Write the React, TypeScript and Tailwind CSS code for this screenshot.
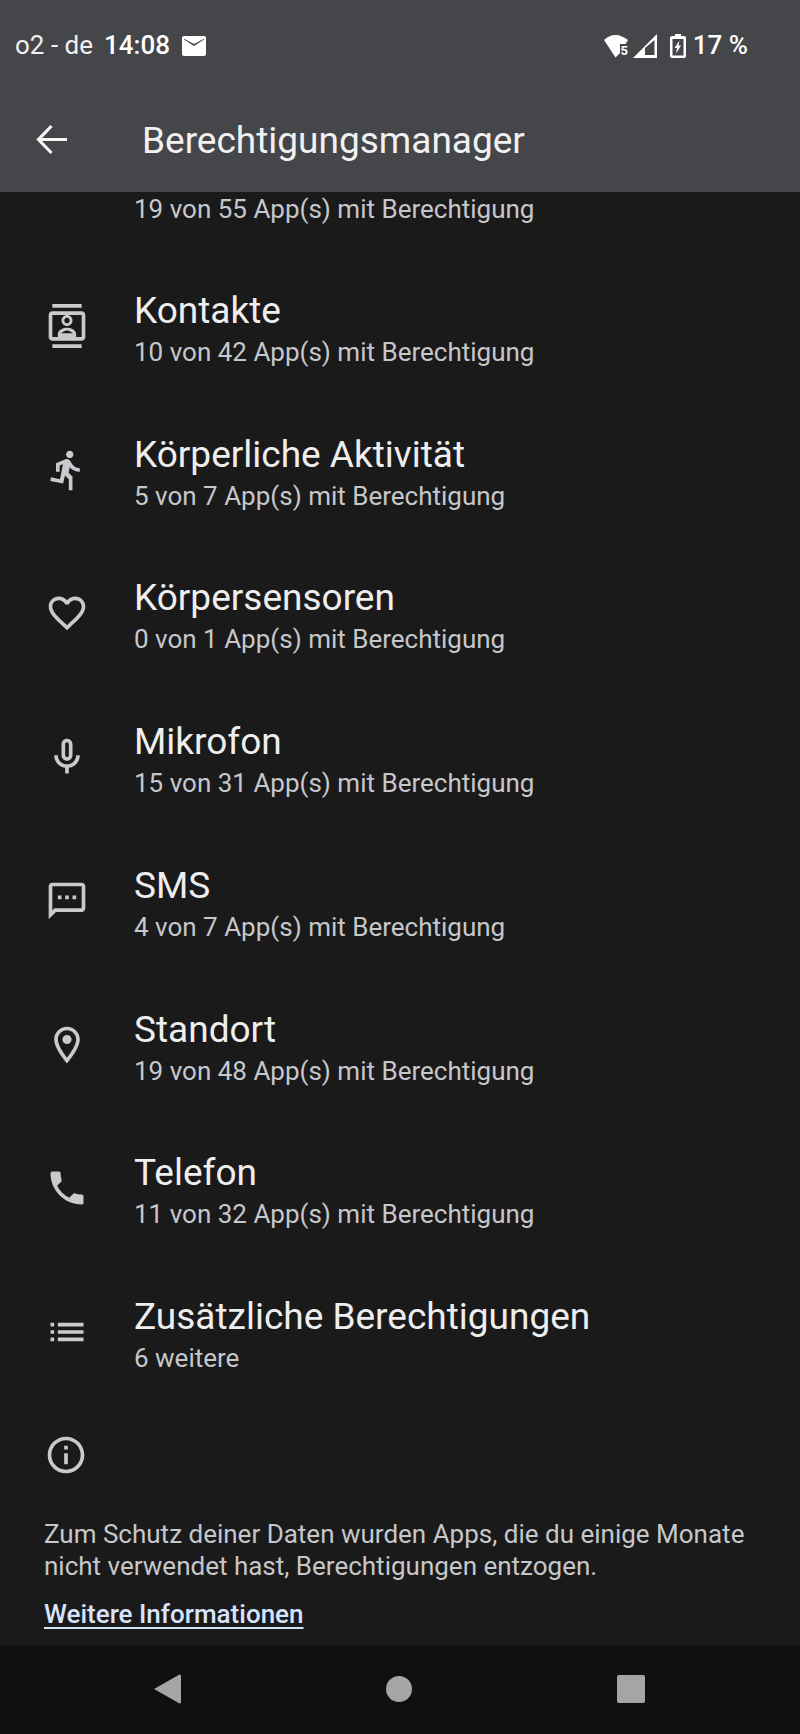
import React from "react";

const Ic = ({ d, cls = "w-[44px] h-[44px]" }: { d: string; cls?: string }) => (
  <svg viewBox="0 0 24 24" className={cls} fill="#c9cace">
    <path d={d} />
  </svg>
);

const icons: Record<string, string> = {
  contacts:
    "M20 0H4v2h16V0zM4 24h16v-2H4v2zM20 4H4c-1.1 0-2 .9-2 2v12c0 1.1.9 2 2 2h16c1.1 0 2-.9 2-2V6c0-1.1-.9-2-2-2zm0 14H4V6h16v12zM12 12c1.66 0 3-1.34 3-3s-1.34-3-3-3-3 1.34-3 3 1.34 3 3 3zm0-4.5c.83 0 1.5.67 1.5 1.5s-.67 1.5-1.5 1.5-1.5-.67-1.5-1.5.67-1.5 1.5-1.5zM17 16.5c0-2.5-3.31-3.5-5-3.5s-5 1-5 3.5V18h10v-1.5zM8.81 16c.61-.52 2.03-1.5 3.19-1.5 1.17 0 2.59.98 3.2 1.5H8.81z",
  run:
    "M13.49 5.48c1.1 0 2-.9 2-2s-.9-2-2-2-2 .9-2 2 .9 2 2 2zm-3.6 13.9l1-4.4 2.1 2v6h2v-7.5l-2.1-2 .6-3c1.3 1.5 3.3 2.5 5.5 2.5v-2c-1.9 0-3.5-1-4.3-2.4l-1-1.6c-.4-.6-1-1-1.7-1-.3 0-.5.1-.8.1l-5.2 2.2v4.7h2v-3.4l1.8-.7-1.6 8.1-4.9-1-.4 2 7 1.4z",
  heart:
    "M16.5 3c-1.74 0-3.41.81-4.5 2.09C10.91 3.81 9.24 3 7.5 3 4.42 3 2 5.42 2 8.5c0 3.78 3.4 6.86 8.55 11.54L12 21.35l1.45-1.32C18.6 15.36 22 12.28 22 8.5 22 5.42 19.58 3 16.5 3zm-4.4 15.55l-.1.1-.1-.1C7.14 14.24 4 11.39 4 8.5 4 6.5 5.5 5 7.5 5c1.54 0 3.04.99 3.57 2.36h1.87C13.46 5.99 14.96 5 16.5 5c2 0 3.5 1.5 3.5 3.5 0 2.89-3.14 5.74-7.9 10.05z",
  mic:
    "M12 14c1.66 0 3-1.34 3-3V5c0-1.66-1.34-3-3-3S9 3.34 9 5v6c0 1.66 1.34 3 3 3zm-1-9c0-.55.45-1 1-1s1 .45 1 1v6c0 .55-.45 1-1 1s-1-.45-1-1V5zm6 6c0 2.76-2.24 5-5 5s-5-2.24-5-5H5c0 3.53 2.61 6.43 6 6.92V21h2v-3.08c3.39-.49 6-3.39 6-6.92h-2z",
  sms:
    "M20 2H4c-1.1 0-2 .9-2 2v18l4-4h14c1.1 0 2-.9 2-2V4c0-1.1-.9-2-2-2zm0 14H5.17L4 17.17V4h16v12zM7 9h2v2H7zm4 0h2v2h-2zm4 0h2v2h-2z",
  place:
    "M12 2C8.13 2 5 5.13 5 9c0 5.25 7 13 7 13s7-7.75 7-13c0-3.87-3.13-7-7-7zM7 9c0-2.76 2.24-5 5-5s5 2.24 5 5c0 2.88-2.88 7.19-5 9.88C9.92 16.21 7 11.85 7 9zm5-2.5a2.5 2.5 0 1 0 0 5 2.5 2.5 0 0 0 0-5z",
  phone:
    "M6.62 10.79c1.44 2.83 3.76 5.14 6.59 6.59l2.2-2.2c.27-.27.67-.36 1.02-.24 1.12.37 2.33.57 3.57.57.55 0 1 .45 1 1V20c0 .55-.45 1-1 1-9.39 0-17-7.61-17-17 0-.55.45-1 1-1h3.5c.55 0 1 .45 1 1 0 1.25.2 2.45.57 3.57.11.35.03.74-.25 1.02l-2.2 2.2z",
  list:
    "M3 13h2v-2H3v2zm0 4h2v-2H3v2zm0-8h2V7H3v2zm4 4h14v-2H7v2zm0 4h14v-2H7v2zM7 7v2h14V7H7z",
  info:
    "M11 7h2v2h-2zm0 4h2v6h-2zm1-9C6.48 2 2 6.48 2 12s4.48 10 10 10 10-4.48 10-10S17.52 2 12 2zm0 18c-4.41 0-8-3.59-8-8s3.59-8 8-8 8 3.59 8 8-3.59 8-8 8z",
};

const rows = [
  ["contacts", "Kontakte", "10 von 42 App(s) mit Berechtigung"],
  ["run", "Körperliche Aktivität", "5 von 7 App(s) mit Berechtigung"],
  ["heart", "Körpersensoren", "0 von 1 App(s) mit Berechtigung"],
  ["mic", "Mikrofon", "15 von 31 App(s) mit Berechtigung"],
  ["sms", "SMS", "4 von 7 App(s) mit Berechtigung"],
  ["place", "Standort", "19 von 48 App(s) mit Berechtigung"],
  ["phone", "Telefon", "11 von 32 App(s) mit Berechtigung"],
  ["list", "Zusätzliche Berechtigungen", "6 weitere"],
];

export default function App() {
  return (
    <div className="w-[800px] h-[1734px] flex flex-col bg-[#1a1a1b] overflow-hidden font-['Roboto',sans-serif]">
      <header className="h-[192px] shrink-0 bg-[#45464a] flex flex-col text-white">
        <div className="h-[90px] flex items-center justify-between pl-[15px] pr-[52px] pt-[1px]">
          <div className="flex items-center">
            <span className="text-[26px] text-[#f1f1f2]">o2 - de</span>
            <span className="text-[26px] font-medium ml-[11px]">14:08</span>
            <svg viewBox="0 0 24 20" className="w-[24px] h-[20px] ml-[12px]" fill="white">
              <path d="M2 0h20a2 2 0 0 1 2 2v16a2 2 0 0 1-2 2H2a2 2 0 0 1-2-2V2a2 2 0 0 1 2-2zm0 3.500l10 6.500 10-6.500V2.800L12 8 2 2.800v.7z" fillRule="evenodd" />
            </svg>
          </div>
          <div className="flex items-center">
            <svg viewBox="0 0 26 24" className="w-[26px] h-[24px]" fill="white">
              <path d="M0 6C3 3 7 1 11.500 1S20 3 24 6l-2.500 4H16V19l-4.500 4.500z" />
              <text x="16.500" y="21" fontSize="13" fontWeight="700" fontFamily="Roboto">5</text>
            </svg>
            <svg viewBox="0 0 24 24" className="w-[24px] h-[24px] ml-[3px]" fill="white">
              <path fillRule="evenodd" d="M24 0v24H0zM21.500 6L12 14v7h9.500z" />
            </svg>
            <svg viewBox="0 0 16 24" className="w-[16px] h-[24px] ml-[13px]" fill="white">
              <path fillRule="evenodd" d="M5 0h6v2h3a2 2 0 0 1 2 2v18a2 2 0 0 1-2 2H2a2 2 0 0 1-2-2V4a2 2 0 0 1 2-2h3zM2.500 5v16.500h11V5zM9.500 6.500L4.500 14H7l-1 5.500 5-8H8.500z" />
            </svg>
            <span className="text-[26px] font-medium ml-[7px]">17 %</span>
          </div>
        </div>
        <div className="h-[102px] flex items-center pb-[2px]">
          <svg viewBox="0 0 32 32" className="w-[32px] h-[32px] ml-[36px]" fill="none" stroke="#f5f5f6" strokeWidth="3.200">
            <path d="M31 15.500H3M15.500 2L2.500 15.500 15.500 29" />
          </svg>
          <h1 className="text-[37px] font-normal text-[#f1f1f2] ml-[74px] leading-none">Berechtigungsmanager</h1>
        </div>
      </header>

      <main className="flex-1 min-h-0 overflow-hidden flex flex-col">
        <div className="pl-[134px] h-[66px] shrink-0 pt-[1px] text-[26px] leading-[32px] text-[#c6c7ca]">19 von 55 App(s) mit Berechtigung</div>
        {rows.map(([icon, title, sub]) => (
          <div key={title} className="h-[143.75px] shrink-0 flex items-center">
            <div className="w-[134px] shrink-0 flex justify-center pb-[8px]">
              <Ic d={icons[icon]} />
            </div>
            <div className="pb-[4px]">
              <div className="text-[37px] leading-[46px] text-[#eeeeef]">{title}</div>
              <div className="mt-[2px] text-[26px] leading-[32px] text-[#c6c7ca]">{sub}</div>
            </div>
          </div>
        ))}
        <div className="pl-[44px] pt-[25px]">
          <Ic d={icons.info} />
          <p className="mt-[41px] text-[26px] leading-[32px] text-[#c6c7ca]">
            Zum Schutz deiner Daten wurden Apps, die du einige Monate
            <br />
            nicht verwendet hast, Berechtigungen entzogen.
          </p>
          <a className="block mt-[16px] text-[26px] leading-[32px] font-medium text-[#d6e3fb] underline underline-offset-[4px]">
            Weitere Informationen
          </a>
        </div>
      </main>

      <nav className="h-[89px] shrink-0 bg-[#101010] flex items-center">
        <div className="w-full flex justify-between items-center pl-[154px] pr-[155px] pb-[1px]">
          <svg viewBox="0 0 27 30" className="w-[27px] h-[30px]" fill="#a5a5a5">
            <path d="M25.500 0.500a1.500 1.500 0 0 1 1.500 1.500v26a1.500 1.500 0 0 1-1.500 1.500L0 15z" />
          </svg>
          <div className="w-[26px] h-[26px] rounded-full bg-[#a5a5a5]"></div>
          <div className="w-[28px] h-[28px] rounded-[2px] bg-[#a5a5a5]"></div>
        </div>
      </nav>
    </div>
  );
}
